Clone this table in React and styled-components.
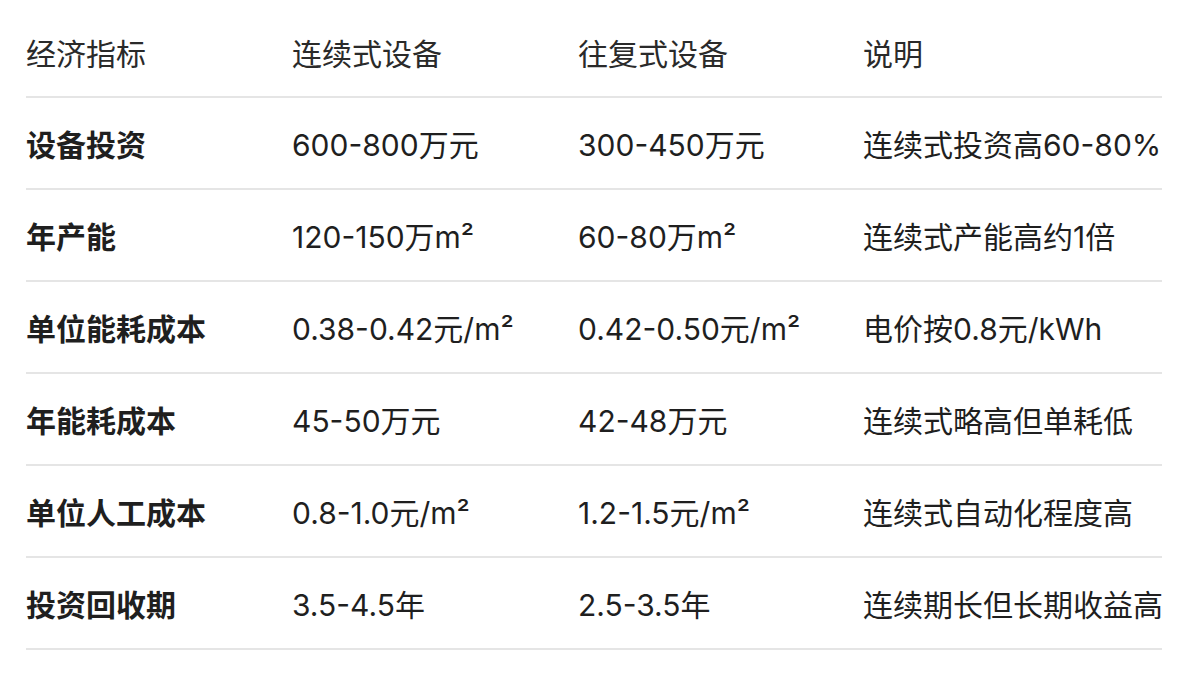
import React from 'react';
import styled, { createGlobalStyle } from 'styled-components';

const GlobalStyle = createGlobalStyle`
  html, body {
    margin: 0;
    padding: 0;
    background: #ffffff;
  }
  body {
    font-family: Inter, "Noto Sans CJK SC", "Noto Sans", sans-serif;
    color: #1f1f1f;
  }
`;

const Wrapper = styled.div`
  padding: 8px 28px 0 26px;
`;

const Table = styled.table`
  width: 100%;
  border-collapse: collapse;
  table-layout: fixed;
  font-size: 30px;
  line-height: 44px;
`;

const Col = styled.col`
  width: ${p => p.$w || 'auto'};
`;

const HeadCell = styled.th`
  text-align: left;
  font-weight: 400;
  color: #2a2a2a;
  padding: 24px 0 20px;
  border-bottom: 2px solid #e5e5e5;
  white-space: nowrap;
`;

const Cell = styled.td`
  text-align: left;
  font-weight: ${p => (p.$strong ? 700 : 400)};
  color: #1f1f1f;
  padding: 25px 0 21px;
  border-bottom: 2px solid #e5e5e5;
  white-space: nowrap;
`;

const headers = ['经济指标', '连续式设备', '往复式设备', '说明'];

const rows = [
  ['设备投资', '600-800万元', '300-450万元', '连续式投资高60-80%'],
  ['年产能', '120-150万m²', '60-80万m²', '连续式产能高约1倍'],
  ['单位能耗成本', '0.38-0.42元/m²', '0.42-0.50元/m²', '电价按0.8元/kWh'],
  ['年能耗成本', '45-50万元', '42-48万元', '连续式略高但单耗低'],
  ['单位人工成本', '0.8-1.0元/m²', '1.2-1.5元/m²', '连续式自动化程度高'],
  ['投资回收期', '3.5-4.5年', '2.5-3.5年', '连续期长但长期收益高'],
];

export default function App() {
  return (
    <>
      <GlobalStyle />
      <Wrapper>
        <Table>
          <colgroup>
            <Col $w="266px" />
            <Col $w="286px" />
            <Col $w="285px" />
            <Col />
          </colgroup>
          <thead>
            <tr>
              {headers.map(h => (
                <HeadCell key={h}>{h}</HeadCell>
              ))}
            </tr>
          </thead>
          <tbody>
            {rows.map(r => (
              <tr key={r[0]}>
                {r.map((c, i) => (
                  <Cell key={i} $strong={i === 0}>{c}</Cell>
                ))}
              </tr>
            ))}
          </tbody>
        </Table>
      </Wrapper>
    </>
  );
}
